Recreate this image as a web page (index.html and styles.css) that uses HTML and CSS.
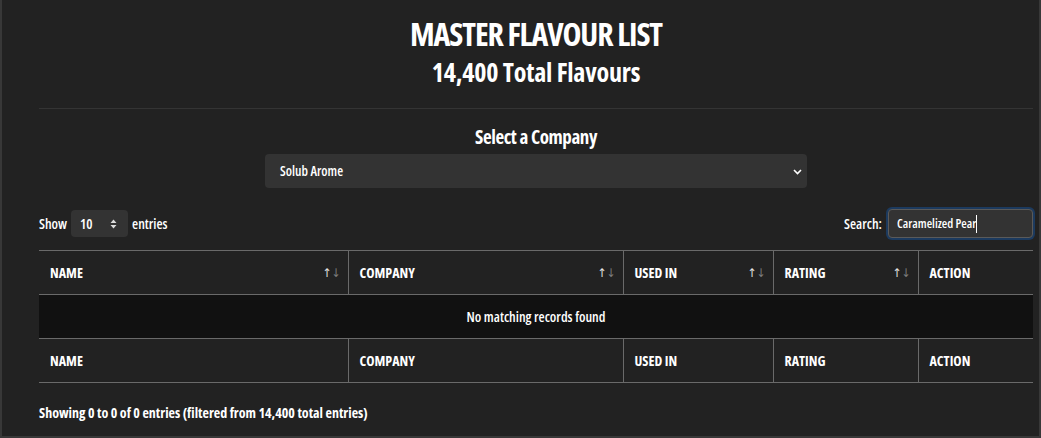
FILE: index.html
```html
<!DOCTYPE html>
<html>
<head>
<meta charset="utf-8">
<link rel="stylesheet" href="styles.css">
</head>
<body>
<div class="card">
  <header class="head">
    <h1 class="title">MASTER FLAVOUR LIST</h1>
    <h2 class="subtitle">14,400 Total Flavours</h2>
  </header>
  <div class="rule"></div>
  <div class="company">
    <div class="company-label">Select a Company</div>
    <div class="company-select">
      <span>Solub Arome</span>
      <svg class="chev" width="9" height="6" viewBox="0 0 9 6"><path d="M1 1l3.5 3.5L8 1" fill="none" stroke="#fff" stroke-width="1.6"/></svg>
    </div>
  </div>
  <div class="controls">
    <div class="length">Show
      <div class="len-select"><span>10</span>
        <svg width="7" height="10" viewBox="0 0 7 10"><path d="M3.5 0.5L6.5 4H0.5z M3.5 9.5L0.5 6H6.5z" fill="#ddd"/></svg>
      </div>
      entries</div>
    <div class="search">Search:
      <div class="search-input"><span>Caramelized Pear</span><span class="caret"></span></div>
    </div>
  </div>
  <table class="grid">
    <colgroup>
      <col class="c1"><col class="c2"><col class="c3"><col class="c4"><col class="c5">
    </colgroup>
    <thead>
      <tr>
        <th><div class="th-in">NAME<span class="sort"><b>↑</b><i>↓</i></span></div></th>
        <th><div class="th-in">COMPANY<span class="sort"><b>↑</b><i>↓</i></span></div></th>
        <th><div class="th-in">USED IN<span class="sort"><b>↑</b><i>↓</i></span></div></th>
        <th><div class="th-in">RATING<span class="sort"><b>↑</b><i>↓</i></span></div></th>
        <th><div class="th-in">ACTION</div></th>
      </tr>
    </thead>
    <tbody>
      <tr><td colspan="5" class="empty">No matching records found</td></tr>
    </tbody>
    <tfoot>
      <tr><th>NAME</th><th>COMPANY</th><th>USED IN</th><th>RATING</th><th>ACTION</th></tr>
    </tfoot>
  </table>
  <div class="info">Showing 0 to 0 of 0 entries (filtered from 14,400 total entries)</div>
</div>
</body>
</html>
```

FILE: styles.css
```css
html, body {
  margin: 0;
  background: #222222;
}
body {
  font-family: "Open Sans", "DejaVu Sans Condensed", sans-serif;
  font-stretch: 75%;
  color: #fff;
}
.card {
  box-sizing: border-box;
  height: 438px;
  border-left: 2px solid #383838;
  border-right: 2px solid #383838;
  border-bottom: 2px solid #383838;
  padding: 0 6px 0 37px;
}
.head {
  text-align: center;
  padding-top: 15px;
}
.title {
  margin: 0;
  font-size: 32px;
  line-height: 38px;
  font-weight: 700;
  letter-spacing: -1.1px;
}
.subtitle {
  margin: 3px 0 0;
  font-size: 26px;
  line-height: 32px;
  font-weight: 700;
  letter-spacing: -0.2px;
}
.rule {
  height: 1px;
  background: #343434;
  margin-top: 20px;
}
.company {
  display: flex;
  flex-direction: column;
  align-items: center;
  padding-top: 16px;
}
.company-label {
  font-size: 19px;
  font-weight: 700;
  line-height: 24px;
  letter-spacing: -0.4px;
}
.company-select {
  box-sizing: border-box;
  margin-top: 5px;
  width: 542px;
  height: 34px;
  background: #333;
  border-radius: 4px;
  display: flex;
  align-items: center;
  justify-content: space-between;
  padding: 0 5px 0 15px;
  font-size: 13.5px;
  font-weight: 600;
}
.chev { margin-top: 1px; }
.controls {
  display: flex;
  justify-content: space-between;
  align-items: center;
  margin-top: 21px;
  font-size: 14px;
  font-weight: 600;
}
.length, .search {
  display: flex;
  align-items: center;
  gap: 4px;
}
.len-select {
  box-sizing: border-box;
  width: 57px;
  height: 27px;
  background: #333;
  border-radius: 4px;
  display: flex;
  align-items: center;
  justify-content: space-between;
  padding: 0 11px 0 9px;
}
.search-input {
  box-sizing: border-box;
  width: 145px;
  height: 29px;
  background: #333;
  border: 1px solid #5a5a5a;
  border-radius: 4px;
  box-shadow: 0 0 0 2px #1c3a5e;
  display: flex;
  align-items: center;
  padding-left: 8px;
  margin-left: 2px;
  font-size: 12.5px;
}
.caret {
  width: 1px;
  height: 18px;
  background: #fff;
}
.grid {
  width: 994px;
  margin-top: 12px;
  border-collapse: collapse;
  table-layout: fixed;
  font-size: 14px;
}
.c1 { width: 309px; }
.c2 { width: 275px; }
.c3 { width: 150px; }
.c4 { width: 145px; }
.c5 { width: 115px; }
.grid th {
  height: 43px;
  text-align: left;
  font-weight: 700;
  padding: 0 0 0 11px;
  border-left: 1px solid #6a6a6a;
  border-top: 1px solid #6a6a6a;
  border-bottom: 1px solid #6a6a6a;
}
.grid th:first-child { border-left: none; }
.th-in {
  display: flex;
  justify-content: space-between;
  align-items: center;
  padding-right: 7px;
}
.sort {
  font-size: 12px;
  font-weight: 400;
}
.sort b { font-weight: 400; color: #e4e4e4; }
.sort i { font-style: normal; color: #7d7d7d; }
.empty {
  height: 43px;
  background: #111;
  text-align: center;
  font-weight: 600;
  padding: 0;
}
.info {
  margin-top: 20px;
  font-size: 14px;
  font-weight: 700;
}
```
